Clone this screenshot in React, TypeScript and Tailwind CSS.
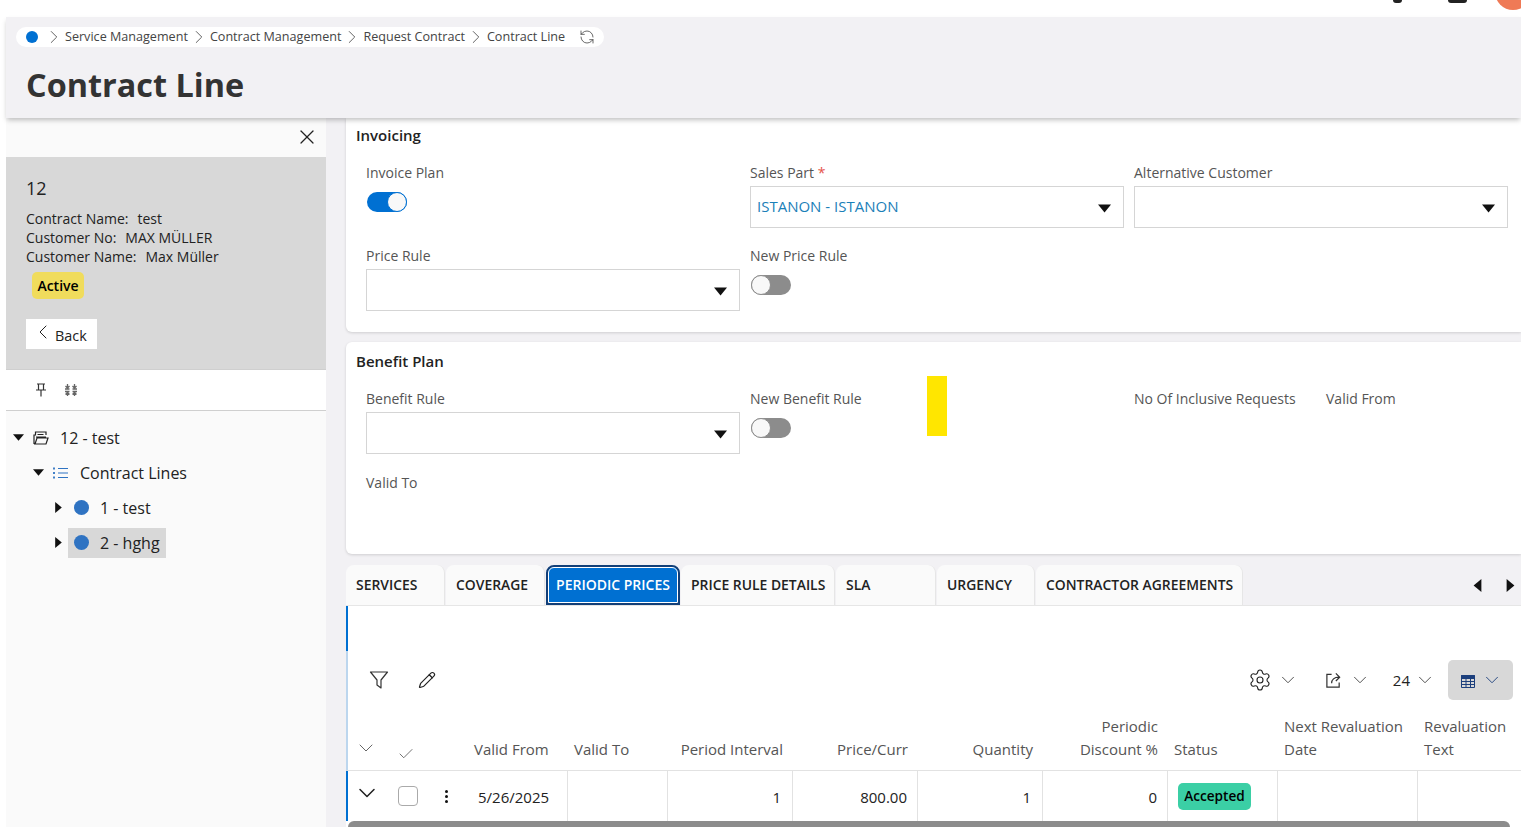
import { ChevronDown, ChevronLeft, ChevronRight, Check, Pencil, RefreshCcw, Settings, X } from 'lucide-react';

const Caret = ({ dir = 'down', className = '' }: { dir?: 'down' | 'right' | 'left'; className?: string }) => {
  const points = { down: '0,2 10,2 5,8', right: '2,0 8,5 2,10', left: '8,0 2,5 8,10' }[dir];
  return (
    <svg viewBox="0 0 10 10" className={`w-[10px] h-[10px] shrink-0 ${className}`} fill="#111">
      <polygon points={points} />
    </svg>
  );
};

const Crumb = ({ label }: { label: string }) => (
  <>
    <ChevronRight className="w-[22px] h-[22px] text-[#555]" strokeWidth={1} />
    <span>{label}</span>
  </>
);

const Toggle = ({ on = false }: { on?: boolean }) => (
  <div className={`w-10 h-5 ml-[1px] mt-[6px] rounded-full flex items-center ${on ? 'bg-[#0070d2] justify-end' : 'bg-[#8c8c8c] justify-start'}`}>
    <div className={`w-5 h-5 rounded-full bg-[#f8f8f8] border ${on ? 'border-[#0070d2]' : 'border-[#8c8c8c]'}`} />
  </div>
);

const Label = ({ children }: { children: React.ReactNode }) => (
  <div className="h-[25px] pt-[2px] text-[14px] leading-[20px] text-[#555]">{children}</div>
);

const Field = ({ label, value, required }: { label: string; value?: string; required?: boolean }) => (
  <div>
    <Label>
      {label}
      {required && <span className="text-[#e5534b]"> *</span>}
    </Label>
    <div className="h-[42px] border border-[#d5d5d5] bg-white flex items-center justify-between pl-[6px] pr-[12px] text-[15px] text-[#1b80b8]">
      <span className="-translate-y-[1px]">{value}</span>
      <Caret className="translate-y-[1px] w-[13px] h-[13px]" />
    </div>
  </div>
);

const Tab = ({ label, width, active }: { label: string; width: string; active?: boolean }) =>
  active ? (
    <div className={`${width} h-[40px] rounded-t-[8px] border-[2px] border-b-[3px] border-[#123f78] bg-[#0070d2] outline-1 -outline-offset-[3px] outline-white flex items-center justify-center text-[14px] font-semibold text-white`}>
      {label}
    </div>
  ) : (
    <div className={`${width} h-[40px] rounded-t-[8px] bg-[#fafafa] border-r border-[#e6e6e6] pl-[10px] flex items-center text-[13.9px] font-semibold text-[#222]`}>
      {label}
    </div>
  );

const gridCols = 'grid grid-cols-[42px_40px_38px_100px_100px_125px_125px_125px_125px_110px_140px_104px]';

export default function App() {
  return (
    <div className="w-[1521px] h-[827px] overflow-hidden bg-white flex flex-col font-['Open_Sans',sans-serif] text-[#222]">
      {/* sliver of the app bar, cut off by the capture */}
      <div className="h-[17px] shrink-0 flex justify-end items-start">
        <div className="w-[9px] h-[3px] rounded-b-full bg-[#222] mr-[46px]" />
        <div className="w-[19px] h-[3px] rounded-b-full bg-[#222] mr-[28px]" />
        <div className="w-[36px] h-[36px] rounded-full bg-[#ef7a56] shrink-0 -mt-[26px] -mr-[10px]" />
      </div>

      <div className="flex-1 min-h-0 pl-[6px] flex flex-col bg-white">
        <header className="h-[101px] shrink-0 bg-[#f2f1f4] shadow-[0_3px_5px_-1px_rgba(0,0,0,0.25)] z-10 pl-[10px] pt-[10px]">
          <div className="w-[588px] h-[20px] rounded-full bg-white flex items-center pl-[10px] text-[12.6px] leading-none text-[#444]">
            <span className="w-3 h-3 rounded-full bg-[#0070d2] mr-[5px]" />
            <Crumb label="Service Management" />
            <Crumb label="Contract Management" />
            <Crumb label="Request Contract" />
            <Crumb label="Contract Line" />
            <RefreshCcw className="w-[16px] h-[16px] ml-[14px] text-[#444]" strokeWidth={1.2} />
          </div>
          <h1 className="mt-[15px] ml-[10px] text-[32.4px] leading-[44px] font-bold text-[#333]">Contract Line</h1>
        </header>

        <div className="flex-1 min-h-0 flex bg-[#f2f1f4]">
          <aside className="w-[320px] shrink-0 flex flex-col bg-[#fafafa]">
            <div className="h-[39px] shrink-0 flex items-center justify-end pr-[7px]">
              <X className="w-[24px] h-[24px] -translate-y-[1px] text-[#222]" strokeWidth={1.2} />
            </div>
            <div className="h-[212px] shrink-0 bg-[#d8d8d8] pl-[20px] pt-[18px] text-[14px] leading-[19px] text-[#222]">
              <div className="text-[18px] leading-[26px] mb-[8px]">12</div>
              <div>Contract Name:<span className="ml-[9px]">test</span></div>
              <div>Customer No:<span className="ml-[9px]">MAX MÜLLER</span></div>
              <div>Customer Name:<span className="ml-[9px]">Max Müller</span></div>
              <div className="ml-[6px] mt-[6px] w-[52px] h-[27px] rounded-[5px] bg-[#f0dc5c] flex items-center justify-center font-semibold text-black">Active</div>
              <div className="mt-[20px] w-[71px] h-[30px] pt-[2px] bg-white flex items-center pl-[5px] text-[14.4px]">
                <ChevronLeft className="w-[24px] h-[24px] -translate-y-[3px]" strokeWidth={1} />
                Back
              </div>
            </div>
            <div className="h-[42px] shrink-0 bg-white border-y border-[#cfcfcf] flex items-center pl-[29px] gap-[17px]">
              <svg viewBox="0 0 12 14" className="w-[12px] h-[14px]" fill="none" stroke="#333" strokeWidth="1.2">
                <path d="M2 1h8M3.5 1v5.5M8.5 1v5.5M1 7h10M6 7v6.5" />
              </svg>
              <svg viewBox="0 0 14 14" className="w-[14px] h-[14px]" fill="none" stroke="#666" strokeWidth="1.3">
                <path d="M1 6h4.5M8.5 6H13M1 8.5h4.5M8.5 8.5H13M1.5 3 3.5 5 5.5 3M8.5 3l2 2 2-2M1.5 11.5l2-2 2 2M8.5 11.5l2-2 2 2M3.5 1v4M10.5 1v4M3.5 9.5V13M10.5 9.5V13" />
              </svg>
            </div>
            <div className="pt-[9px] text-[16px] text-[#222]">
              <div className="h-[35px] flex items-center pl-[7px]">
                <Caret className="w-[11px] h-[11px]" />
                <svg viewBox="0 0 16 14" className="w-[16px] h-[14px] ml-[9px]" fill="none" stroke="#222" strokeWidth="1.2">
                  <path d="M1 13V4h1.5V1h10.5v3M4.5 3.5h6M3 6h10M1 13h12l2-6H4L2 13" />
                </svg>
                <span className="ml-[11px]">12 - test</span>
              </div>
              <div className="h-[35px] flex items-center pl-[27px]">
                <Caret className="w-[11px] h-[11px]" />
                <svg viewBox="0 0 16 14" className="w-[16px] h-[14px] ml-[9px]" fill="none" stroke="#2f73c2" strokeWidth="1.1">
                  <path d="M5 2.5h10M5 7h10M5 11.5h10" />
                  <path d="M1 1.5v2M1 6v2M1 10.5v2" strokeWidth="1.8" />
                </svg>
                <span className="ml-[11px]">Contract Lines</span>
              </div>
              <div className="h-[35px] flex items-center pl-[47px]">
                <Caret dir="right" className="w-[11px] h-[11px]" />
                <span className="w-[15px] h-[15px] rounded-full bg-[#2f73c2] ml-[10px]" />
                <span className="ml-[11px]">1 - test</span>
              </div>
              <div className="h-[35px] flex items-center pl-[47px]">
                <Caret dir="right" className="w-[11px] h-[11px]" />
                <div className="w-[98px] h-[30px] ml-[4px] pl-[6px] bg-[#d8d8d8] flex items-center">
                  <span className="w-[15px] h-[15px] rounded-full bg-[#2f73c2]" />
                  <span className="ml-[11px]">2 - hghg</span>
                </div>
              </div>
            </div>
          </aside>

          <main className="flex-1 min-w-0 pl-[20px] flex flex-col overflow-hidden">
            <section className="h-[214px] shrink-0 bg-white rounded-bl-[6px] shadow-[0_1px_3px_rgba(0,0,0,0.15)] pl-[10px] pt-[6px]">
              <h2 className="text-[15px] leading-[22px] font-semibold text-[#222]">Invoicing</h2>
              <div className="mt-[15px] pl-[10px] grid grid-cols-[374px_374px_374px] gap-x-[10px]">
                <div className="h-[83px]">
                  <Label>Invoice Plan</Label>
                  <Toggle on />
                </div>
                <Field label="Sales Part" value="ISTANON - ISTANON" required />
                <Field label="Alternative Customer" />
                <Field label="Price Rule" />
                <div>
                  <Label>New Price Rule</Label>
                  <Toggle />
                </div>
              </div>
            </section>

            <section className="relative h-[212px] shrink-0 mt-[10px] bg-white rounded-l-[6px] shadow-[0_1px_3px_rgba(0,0,0,0.15)] pl-[10px] pt-[8px]">
              <h2 className="text-[15px] leading-[22px] font-semibold text-[#222]">Benefit Plan</h2>
              <div className="absolute left-[581px] top-[34px] w-[20px] h-[60px] bg-[#ffe600]" />
              <div className="mt-[15px] pl-[10px] grid grid-cols-[374px_374px_182px_190px] gap-x-[10px]">
                <Field label="Benefit Rule" />
                <div>
                  <Label>New Benefit Rule</Label>
                  <Toggle />
                </div>
                <Label>No Of Inclusive Requests</Label>
                <Label>Valid From</Label>
              </div>
              <div className="mt-[19px] pl-[10px] text-[14px] leading-[20px] text-[#555]">Valid To</div>
            </section>

            <div className="h-[40px] shrink-0 mt-[11px] flex items-end gap-[1px]">
              <Tab label="SERVICES" width="w-[99px]" />
              <Tab label="COVERAGE" width="w-[99px]" />
              <Tab label="PERIODIC PRICES" width="w-[134px]" active />
              <Tab label="PRICE RULE DETAILS" width="w-[154px]" />
              <Tab label="SLA" width="w-[100px]" />
              <Tab label="URGENCY" width="w-[98px]" />
              <Tab label="CONTRACTOR AGREEMENTS" width="w-[207px]" />
              <div className="flex-1 flex items-center justify-end h-[40px] gap-[20px] pr-[4px]">
                <Caret dir="left" className="w-[13px] h-[13px]" />
                <Caret dir="right" className="w-[13px] h-[13px]" />
              </div>
            </div>

            <section className="flex-1 min-h-0 bg-white border-t border-t-[#e6e6e6] flex flex-col">
              <div className="h-[45px] shrink-0 border-l-2 border-[#0070d2]" />
              <div className="h-[65px] shrink-0 border-l-2 border-[#bcd6ee] flex items-end justify-between pb-[16px] pl-[21px] pr-[8px]">
                <div className="flex items-center gap-[29px] h-[40px]">
                  <svg viewBox="0 0 20 20" className="w-[20px] h-[20px]" fill="none" stroke="#333" strokeWidth="1.2">
                    <path d="M1.5 2h17l-6.5 8v8l-4-3v-5L1.5 2Z" strokeLinejoin="round" />
                  </svg>
                  <Pencil className="w-[18px] h-[18px] text-[#222]" strokeWidth={1.6} />
                </div>
                <div className="flex items-center h-[40px] text-[15px] text-[#222]">
                  <Settings className="w-[24px] h-[24px]" strokeWidth={1.1} />
                  <ChevronDown className="w-[22px] h-[22px] ml-[5px] text-[#444]" strokeWidth={1} />
                  <svg viewBox="0 0 18 18" className="w-[17px] h-[17px] ml-[26px]" fill="none" stroke="#333" strokeWidth="1.3">
                    <path d="M7 2.5H2v13.5h13v-5M7 12c0-4 2.5-6.5 8-6.5M11.5 1.5l4 4-4 4" />
                  </svg>
                  <ChevronDown className="w-[22px] h-[22px] ml-[7px] text-[#444]" strokeWidth={1} />
                  <span className="ml-[22px]">24</span>
                  <ChevronDown className="w-[22px] h-[22px] ml-[4px] text-[#444]" strokeWidth={1} />
                  <div className="ml-[12px] w-[65px] h-[40px] rounded-[5px] bg-[#d8d8d8] flex items-center pl-[13px] gap-[6px]">
                    <svg viewBox="0 0 14 14" className="w-[14px] h-[14px] translate-y-[1px]" fill="none" stroke="#1c3f7c" strokeWidth="1">
                      <path d="M.5 1.5h13v12H.5zM.5 4.5h13M.5 7.5h13M.5 10.5h13M5 4.5v9M9.5 4.5v9" />
                      <path d="M.5 1.5h13v3H.5z" fill="#1c3f7c" />
                    </svg>
                    <ChevronDown className="w-[22px] h-[22px] text-[#1c3f7c]" strokeWidth={1} />
                  </div>
                </div>
              </div>

              <div className={`${gridCols} h-[55px] shrink-0 items-end content-end pb-[9px] border-l-2 border-l-[#bcd6ee] border-b border-b-[#e2e2e2] text-[15px] leading-[23px] text-[#555] w-[1175px]`}>
                <div className="pl-[6px] pb-[1px]"><ChevronDown className="w-[24px] h-[24px]" strokeWidth={0.9} /></div>
                <div className="pl-[7px] -mb-[2px]"><Check className="w-[18px] h-[18px]" strokeWidth={1.1} /></div>
                <div />
                <div className="pl-[6px] whitespace-nowrap">Valid From</div>
                <div className="pl-[6px] whitespace-nowrap">Valid To</div>
                <div className="text-right pr-[10px] whitespace-nowrap">Period Interval</div>
                <div className="text-right pr-[10px]">Price/Curr</div>
                <div className="text-right pr-[10px]">Quantity</div>
                <div className="text-right pr-[10px] whitespace-nowrap">Periodic<br />Discount %</div>
                <div className="pl-[6px]">Status</div>
                <div className="pl-[6px] whitespace-nowrap">Next Revaluation<br />Date</div>
                <div className="pl-[6px] whitespace-nowrap">Revaluation<br />Text</div>
              </div>
              <div className={`${gridCols} h-[50px] shrink-0 border-l-2 border-[#0070d2] text-[15px] text-[#222] w-[1175px]`}>
                <div className="pl-[5px] pt-[8px]"><ChevronDown className="w-[28px] h-[28px]" strokeWidth={1.3} /></div>
                <div className="pt-[15px] pl-[8px]"><div className="w-[20px] h-[20px] rounded-[4px] border border-[#aaa] bg-white" /></div>
                <div className="pt-[19px] pl-[15px] flex flex-col gap-[2px]">
                  <span className="w-[3px] h-[3px] rounded-full bg-[#111]" />
                  <span className="w-[3px] h-[3px] rounded-full bg-[#111]" />
                  <span className="w-[3px] h-[3px] rounded-full bg-[#111]" />
                </div>
                <div className="border-r border-[#e2e2e2] pt-[15px] pl-[10px]">5/26/2025</div>
                <div className="border-r border-[#e2e2e2]" />
                <div className="border-r border-[#e2e2e2] pt-[15px] pr-[11px] text-right">1</div>
                <div className="border-r border-[#e2e2e2] pt-[15px] pr-[10px] text-right">800.00</div>
                <div className="border-r border-[#e2e2e2] pt-[15px] pr-[11px] text-right">1</div>
                <div className="border-r border-[#e2e2e2] pt-[15px] pr-[10px] text-right">0</div>
                <div className="border-r border-[#e2e2e2] pt-[12px] pl-[10px]">
                  <div className="w-[73px] h-[27px] rounded-[5px] bg-[#3bcfa5] flex items-center justify-center text-[13.6px] font-semibold text-black">Accepted</div>
                </div>
                <div className="border-r border-[#e2e2e2]" />
                <div />
              </div>
              <div className="h-[6px] w-[1162px] ml-[2px] shrink-0 rounded-t-[6px] bg-[#8c8c8c]" />
            </section>
          </main>
        </div>
      </div>
    </div>
  );
}
